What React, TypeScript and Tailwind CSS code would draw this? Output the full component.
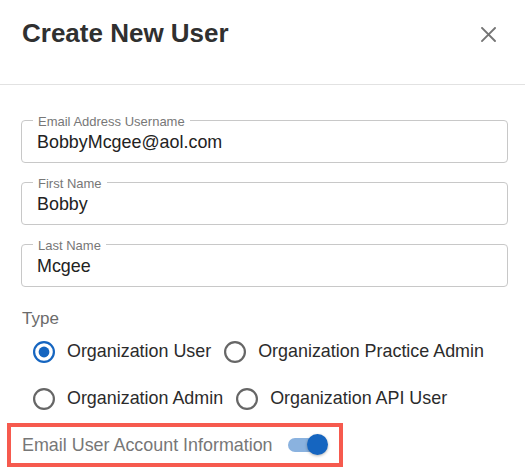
import React from "react";

function Radio({ checked }: { checked?: boolean }) {
  return (
    <svg width="22" height="22" viewBox="0 0 22 22" className="shrink-0">
      <circle cx="11" cy="11" r="9.9" fill="none" stroke={checked ? "#1565c0" : "#666666"} strokeWidth="2.2" />
      {checked && <circle cx="11" cy="11" r="5.4" fill="#1565c0" />}
    </svg>
  );
}

function Field({ label, value }: { label: string; value: string }) {
  return (
    <div className="relative h-[43px] w-[487px] border border-[#c8c8c8] rounded-[4px] flex items-center pl-[15px] pt-px text-[17.9px] text-[#222]">
      <span className="absolute left-[11px] top-0 -translate-y-1/2 bg-white px-[5px] text-[13px] leading-[15px] text-[#777]">
        {label}
      </span>
      {value}
    </div>
  );
}

function RadioItem({ label, checked }: { label: string; checked?: boolean }) {
  return (
    <div className="h-[47px] flex items-center gap-[12px]">
      <Radio checked={checked} />
      <span className="text-[17.9px] text-[#2b2b2b]">{label}</span>
    </div>
  );
}

export default function App() {
  return (
    <div className="w-[525px] h-[469px] bg-white overflow-hidden font-['Liberation_Sans',Arial,sans-serif]">
      <div className="h-[85px] border-b border-[#e2e2e2] pl-[22px] pr-[29px] pt-[18px] flex justify-between items-start">
        <h2 className="text-[26px] font-bold leading-[30px] text-[#303030]">Create New User</h2>
        <svg width="15" height="15" viewBox="0 0 15 15" className="mt-[9px]">
          <path d="M1 1 L14 14 M14 1 L1 14" stroke="#757575" strokeWidth="1.9" strokeLinecap="square" />
        </svg>
      </div>
      <div className="pl-[21px] pt-[35px]">
        <div className="flex flex-col gap-[19px]">
          <Field label="Email Address Username" value="BobbyMcgee@aol.com" />
          <Field label="First Name" value="Bobby" />
          <Field label="Last Name" value="Mcgee" />
        </div>
        <div className="mt-[22px] ml-px text-[17px] leading-[19px] text-[#6b6b6b]">Type</div>
        <div className="flex flex-wrap gap-x-[13px] pl-[12px] w-[490px]">
          <RadioItem label="Organization User" checked />
          <RadioItem label="Organization Practice Admin" />
          <RadioItem label="Organization Admin" />
          <RadioItem label="Organization API User" />
        </div>
        <div className="ml-[-14px] mt-[1px] w-[336px] h-[44px] border-4 border-[#f65a4e] flex items-center pl-[11px] gap-[15px]">
          <span className="text-[17.9px] text-[#777]">Email User Account Information</span>
          <div className="relative w-[40px] h-[22px] shrink-0">
            <div className="absolute left-0 top-[4px] w-[34px] h-[14px] rounded-full bg-[#8ab2df]" />
            <div className="absolute right-0 top-0 w-[21px] h-[21px] rounded-full bg-[#1565c0] shadow-[0_1px_3px_rgba(0,0,0,0.3)]" />
          </div>
        </div>
      </div>
    </div>
  );
}
